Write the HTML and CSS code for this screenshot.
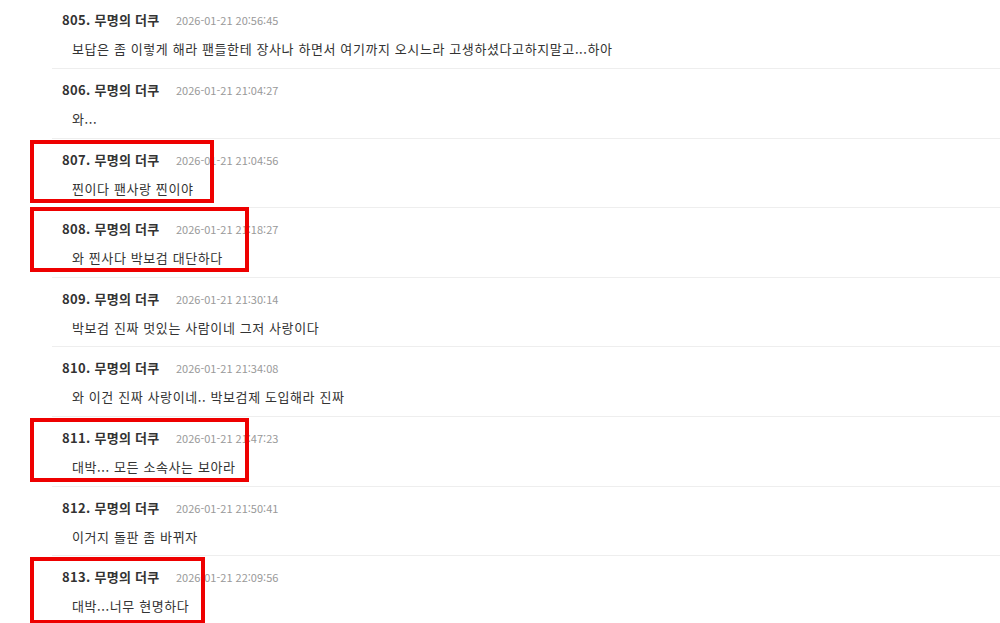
FILE: index.html
```html
<!DOCTYPE html>
<html lang="ko">
<head>
<meta charset="utf-8">
<title>댓글</title>
<link rel="stylesheet" href="styles.css">
</head>
<body>
<ul class="comments">
  <li class="comment">
    <div class="meta"><span class="author">805. 무명의 더쿠</span><span class="date">2026-01-21 20:56:45</span></div>
    <p class="text">보답은 좀 이렇게 해라 팬들한테 장사나 하면서 여기까지 오시느라 고생하셨다고하지말고...하아</p>
  </li>
  <li class="comment">
    <div class="meta"><span class="author">806. 무명의 더쿠</span><span class="date">2026-01-21 21:04:27</span></div>
    <p class="text">와...</p>
  </li>
  <li class="comment">
    <div class="meta"><span class="author">807. 무명의 더쿠</span><span class="date">2026-01-21 21:04:56</span></div>
    <p class="text">찐이다 팬사랑 찐이야</p>
    <span class="mark mark-807"></span>
  </li>
  <li class="comment">
    <div class="meta"><span class="author">808. 무명의 더쿠</span><span class="date">2026-01-21 21:18:27</span></div>
    <p class="text">와 찐사다 박보검 대단하다</p>
    <span class="mark mark-808"></span>
  </li>
  <li class="comment">
    <div class="meta"><span class="author">809. 무명의 더쿠</span><span class="date">2026-01-21 21:30:14</span></div>
    <p class="text">박보검 진짜 멋있는 사람이네 그저 사랑이다</p>
  </li>
  <li class="comment">
    <div class="meta"><span class="author">810. 무명의 더쿠</span><span class="date">2026-01-21 21:34:08</span></div>
    <p class="text">와 이건 진짜 사랑이네.. 박보검제 도입해라 진짜</p>
  </li>
  <li class="comment">
    <div class="meta"><span class="author">811. 무명의 더쿠</span><span class="date">2026-01-21 21:47:23</span></div>
    <p class="text">대박... 모든 소속사는 보아라</p>
    <span class="mark mark-811"></span>
  </li>
  <li class="comment">
    <div class="meta"><span class="author">812. 무명의 더쿠</span><span class="date">2026-01-21 21:50:41</span></div>
    <p class="text">이거지 돌판 좀 바뀌자</p>
  </li>
  <li class="comment">
    <div class="meta"><span class="author">813. 무명의 더쿠</span><span class="date">2026-01-21 22:09:56</span></div>
    <p class="text">대박...너무 현명하다</p>
    <span class="mark mark-813"></span>
  </li>
</ul>
</body>
</html>
```
FILE: styles.css
```css
html, body {
  margin: 0;
  padding: 0;
  background: #ffffff;
  overflow: hidden;
}

body {
  font-family: "Noto Sans CJK KR", "Noto Sans", "Liberation Sans", sans-serif;
  color: #333333;
}

.comments {
  list-style: none;
  margin: -0.6px 0 0 52px;
  padding: 0;
}

.comment {
  position: relative;
  box-sizing: border-box;
  height: 69.6px;
  padding: 11px 0 0 10px;
  border-bottom: 1px solid #eeeeee;
}

.meta {
  display: flex;
  align-items: center;
  height: 20px;
  line-height: 20px;
}

.author {
  font-size: 13px;
  font-weight: bold;
  letter-spacing: 0.3px;
  color: #333333;
  width: 114px;
}

.date {
  font-size: 11px;
  color: #999999;
}

.text {
  margin: 9px 0 0 10px;
  font-size: 13px;
  letter-spacing: 0.6px;
  line-height: 20px;
  color: #333333;
}

.mark {
  position: absolute;
  left: -22px;
  box-sizing: border-box;
  border: 4px solid #ee0000;
  pointer-events: none;
}

.mark-807 { top: 1.5px;  width: 184px; height: 63px; }
.mark-808 { top: -1px;   width: 219px; height: 65px; }
.mark-811 { top: 1px;    width: 219px; height: 64px; }
.mark-813 { top: 1px;    width: 175px; height: 67px; }
```
